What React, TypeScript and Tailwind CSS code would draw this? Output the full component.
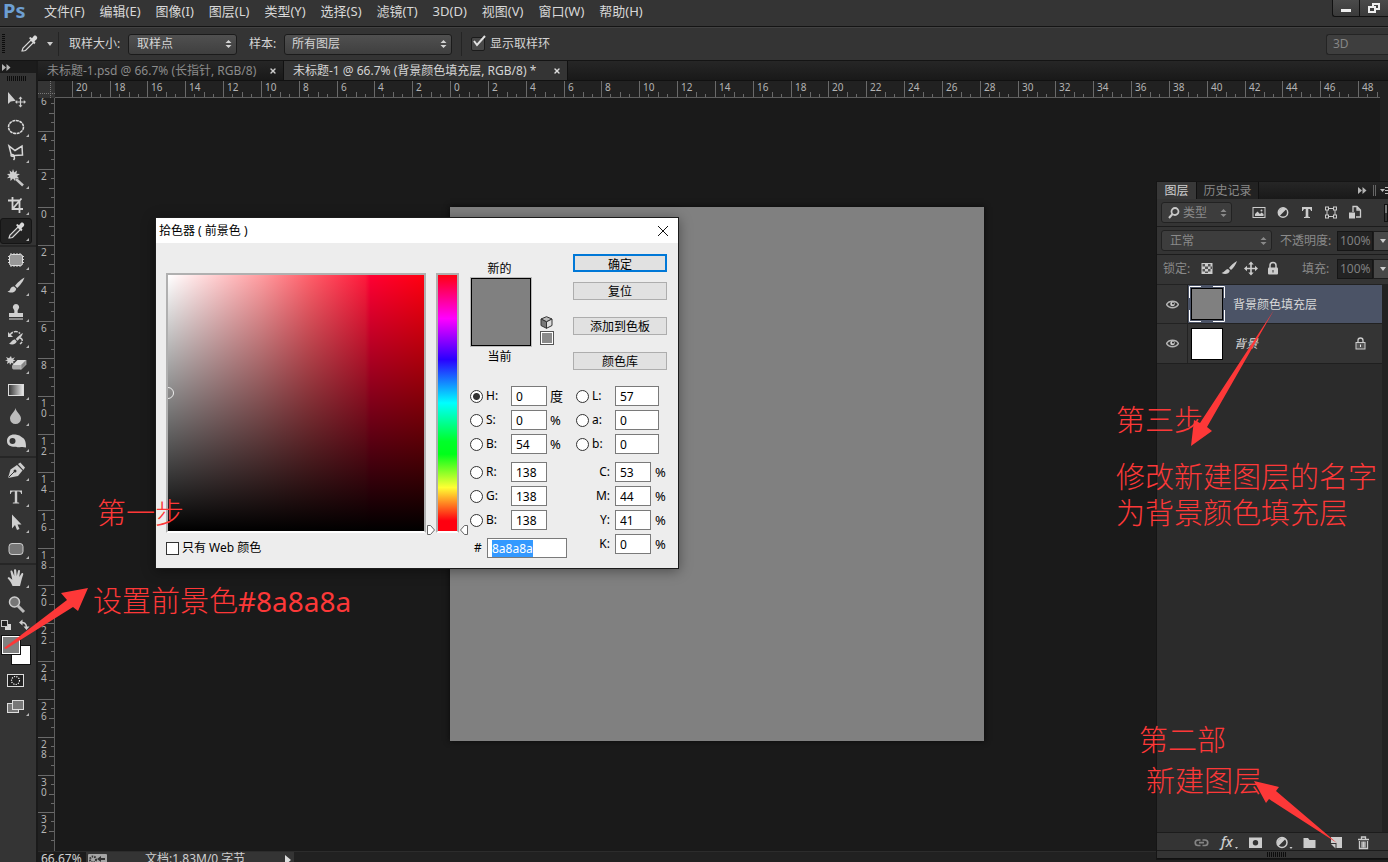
import React, { useEffect, useRef } from 'react';
import { X } from 'lucide-react';

const menus = [
  '文件(F)', '编辑(E)', '图像(I)', '图层(L)', '类型(Y)', '选择(S)',
  '滤镜(T)', '3D(D)', '视图(V)', '窗口(W)', '帮助(H)',
];

const Grip = () => (
  <svg width="20" height="5" className="shrink-0" aria-hidden="true">
    {Array.from({ length: 10 }, (_, i) => (
      <rect key={i} x={i * 2} width="1" height="5" fill="#0c0c0c" />
    ))}
  </svg>
);

const Collapse = () => (
  <svg width="9" height="7" viewBox="0 0 9 7" fill="#b4b4b4" className="shrink-0" aria-hidden="true">
    <path d="M0 0l4 3.5L0 7zM4.5 0l4 3.5-4 3.5z" />
  </svg>
);

const UpDown = () => (
  <svg
    width="7"
    height="10"
    viewBox="0 0 7 10"
    fill="currentColor"
    className="pointer-events-none absolute right-1 top-1/2 -translate-y-1/2"
    aria-hidden="true"
  >
    <path d="M3.5 1L6.5 4h-6zM3.5 9L.5 6h6z" />
  </svg>
);

const dropperPath = (
  <>
    <path d="M9 20l1-3 8-8 2.500 2.500-8 8-2.500 .5z" fill="#333" stroke="#dadada" strokeWidth="1.200" />
    <path d="M16 7l1.500-1 1.500 1.300 1.800-2.300c1.500-1.500 4.700 1 2.900 3.200l-2.200 2 1 1.500-1.300 1.500z" fill="#dadada" />
  </>
);

const brushPath = (
  <>
    <path d="M24.500 4.500c-3 1.500-7.500 5.500-9.500 8.200l2.200 2.200c2.800-2.400 6.300-7 7.300-10.400z" />
    <path d="M14 13.500c-2.500 0-3.500 1.500-4 3.300-.3 1-1.500 1.700-2.500 1.700 2.500 1.900 8 1.500 8.800-2.800z" />
  </>
);

type Tool = { name: string; icon: React.ReactNode; plain?: boolean; active?: boolean };

const toolGroups: Tool[][] = [
  [
    {
      name: '移动工具',
      plain: true,
      icon: (
        <>
          <path d="M8 4v12l2.700-2.500 5-.8z" />
          <path d="M20.500 9.500v9M16 14h9" stroke="#d0d0d0" strokeWidth="1.200" />
          <path d="M20.500 8.500l2 2.200h-4zM20.500 19.500l2-2.200h-4zM15 14l2.200-2v4zM26 14l-2.200-2v4z" />
        </>
      ),
    },
    {
      name: '椭圆选框工具',
      icon: <ellipse cx="16" cy="13" rx="7.500" ry="6.500" fill="none" stroke="#dcdcdc" strokeWidth="1.500" strokeDasharray="3 .6" />,
    },
    {
      name: '套索工具',
      icon: (
        <path
          d="M13.500 20c1-1 1.300-2 .8-3.500l-3-.5c-1-1.500 1-2 3-.5L22.500 15 22 6l-7 4.500L9 6l2.300 9"
          fill="none"
          stroke="#d8d8d8"
          strokeWidth="1.500"
        />
      ),
    },
    {
      name: '魔棒工具',
      icon: (
        <>
          <path d="M13 3l1.200 3.500L17 4.500l-.6 3.200 3.600.3-3 2 2.200 2.500-3.500-.6L15 15l-2-2.600L10.500 15l-.2-3.200-3.300.5L9.200 10 7 8l3.200-.2L9.500 4.500 12 6.300z" />
          <path d="M16 13l7 6.500" stroke="#c8c8c8" strokeWidth="2.500" />
        </>
      ),
    },
    {
      name: '裁剪工具',
      icon: <path d="M12.500 5v12H23M8 8.500h11.500V21M12.500 17l9-10.500" fill="none" stroke="#d4d4d4" strokeWidth="1.800" />,
    },
    { name: '吸管工具', active: true, icon: dropperPath },
  ],
  [
    {
      name: '修复工具',
      icon: (
        <>
          <path d="M11 6v14M14 6v14M17 6v14M20 6v14M8 9.500h16M8 12.500h16M8 15.500h16" stroke="#d8d8d8" strokeWidth="1" />
          <rect x="9.500" y="7.500" width="13" height="11" rx="2" fill="#999" stroke="#ddd" />
        </>
      ),
    },
    { name: '画笔工具', icon: brushPath },
    {
      name: '图章工具',
      icon: (
        <>
          <path d="M16 5a3.200 3.200 0 0 1 2.200 5.500c-.7 1-.7 2-.4 3.500H23v4H9v-4h5.200c.3-1.500.3-2.500-.4-3.500A3.200 3.200 0 0 1 16 5z" />
          <path d="M9 20h14" stroke="#ddd" />
        </>
      ),
    },
    {
      name: '历史记录画笔工具',
      icon: (
        <>
          <path d="M23 8c-2.500 1-5.500 4-7.200 6l1.700 1.700C20 13.700 22 11 23 8z" />
          <path d="M15 14.500c-2.800 0-3 2.500-6 4 2.500 1.800 7.500.8 7.700-2.200z" />
          <path d="M10 10c2-4 8-4.500 10-1.500M20 13c3 1 3 4 0 6" fill="none" stroke="#d0d0d0" strokeWidth="1.500" strokeDasharray="4 1" />
          <path d="M8 7v5h5z" />
        </>
      ),
    },
    {
      name: '橡皮擦工具',
      icon: (
        <>
          <path d="M11 5l.8 2.600L15 6.200l-1.800 2.400 2.300 1.200-2.600.6 1 2.600-2.300-1.300L10 14l-.6-2.500L7 13l.6-3L5 9.500l2.500-1L6 6l3 1.300z" />
          <path d="M17.500 9H26l-5 5h-8.500z" fill="#ddd" />
          <path d="M12.500 14H21v4.500h-7.500c-1.500 0-2-3-1-4.500z" fill="#aaa" />
          <path d="M21 14l5-5v4.500l-5 5z" fill="#888" stroke="#ccc" strokeWidth=".6" />
        </>
      ),
    },
    {
      name: '渐变工具',
      icon: (
        <>
          <defs>
            <linearGradient id="toolFade">
              <stop offset="0" stopColor="#333" />
              <stop offset="1" stopColor="#eee" />
            </linearGradient>
          </defs>
          <rect x="8.500" y="7.500" width="15" height="11" fill="url(#toolFade)" stroke="#ddd" />
        </>
      ),
    },
    { name: '模糊工具', icon: <path d="M15.500 5c.5 4 5.500 6.500 5.500 10.500a5.500 5.500 0 0 1-11 0C10 11.500 14.800 9 15.500 5z" fill="#bcbcbc" /> },
    {
      name: '减淡工具',
      icon: (
        <>
          <path d="M7 12c0-4.500 3.500-7 8.500-6.500 3 .3 5 1.500 7.500 3.500 2 1.500 3 4 3 9.500-2-.5-3-.7-5-.5-2 .5-3 .5-5-.3-5 .3-9-1.200-9-5.700z" />
          <circle cx="12.500" cy="12" r="3" fill="#333" />
        </>
      ),
    },
  ],
  [
    {
      name: '钢笔工具',
      icon: (
        <>
          <path d="M8 20l2.500-8.500L17 7l5.500 5.500L18 18z" />
          <path d="M18 6l2.300-1.500L25 9.500 23.300 12z" />
          <path d="M8.500 19.500l6-6" stroke="#333" />
          <circle cx="15" cy="13" r="1.500" fill="#333" />
        </>
      ),
    },
    {
      name: '文字工具',
      icon: <path d="M10 6.500h12v3.500h-.8c-.4-2-1-2.500-4-2.500v10c0 .8.500 1.200 2 1.200v.8h-6.400v-.8c1.500 0 2-.4 2-1.200v-10c-3 0-3.600.5-4 2.500H10z" />,
    },
    { name: '路径选择工具', icon: <path d="M12 4.500v14l3-3.500 2 5 2.500-1-2-4.500h4z" /> },
    {
      name: '圆角矩形工具',
      icon: <rect x="9" y="7.500" width="14" height="11" rx="3" fill="#777" stroke="#ccc" />,
    },
  ],
  [
    {
      name: '抓手工具',
      icon: (
        <path d="M12.500 21c-1-3-2.500-5-4.700-7.500-.6-1 1-1.800 2-.8l2.500 2-1.800-8c-.2-1.300 1.600-1.500 2-.3L14.300 11 14 5.200c0-1.300 2-1.400 2.200 0l.6 5.800 1.200-5.300c.3-1.200 2.100-.9 2 .4l-.7 5.900 2.200-3.500c.7-1 2.200-.2 1.700 1-1 2.600-1.500 5-2.200 7.500L20 21z" />
      ),
    },
    {
      name: '缩放工具',
      plain: true,
      icon: (
        <>
          <path d="M18 15l6 6" stroke="#bbb" strokeWidth="3" />
          <circle cx="14.500" cy="11" r="5" fill="#777" stroke="#cfcfcf" strokeWidth="1.500" />
        </>
      ),
    },
  ],
];

const Toolbar = () => (
  <aside className="flex w-[38px] shrink-0 flex-col border-r-2 border-[#1a1a1a] bg-[#343434]">
    <div className="flex h-[12px] items-center bg-[#1c1c1c] pl-[2px]">
      <Collapse />
    </div>
    <div className="flex h-[15px] items-start pl-[7px] pt-[3px]">
      <Grip />
    </div>
    {toolGroups.map((group, g) => (
      <div key={g} className={g ? 'mt-[1px] border-t-2 border-[#262626]' : ''}>
        {group.map((tool) => (
          <button
            key={tool.name}
            aria-label={tool.name}
            className={
              tool.active
                ? 'flex h-[26px] w-[32px] rounded-[3px] border border-[#151515] bg-[#222]'
                : 'flex h-[26px] w-[32px] border border-transparent'
            }
          >
            <svg width="30" height="24" viewBox="1 1 30 24" fill="#cfcfcf" className="shrink-0">
              {tool.icon}
              {!tool.plain && <path d="M29 20v3h-3z" fill="#b8b8b8" />}
            </svg>
          </button>
        ))}
      </div>
    ))}
    <svg width="36" height="104" viewBox="0 617 36 104" className="shrink-0" aria-label="前景色和背景色">
      <rect x="5" y="624" width="6" height="6" fill="#d8d8d8" />
      <rect x="1.500" y="620.500" width="6" height="6" fill="#222" stroke="#c8c8c8" />
      <path d="M21 622.500c3-.5 5.500 1 5.500 5" fill="none" stroke="#d0d0d0" strokeWidth="1.500" />
      <path d="M19 622.500l3.500-3v6zM26.500 630l-3-3.500h6z" fill="#d0d0d0" />
      <rect x="11.500" y="645.500" width="19" height="19" fill="#fff" stroke="#111" />
      <rect x="1.500" y="635.500" width="19" height="19" fill="#808080" stroke="#111" />
      <rect x="2.500" y="636.500" width="17" height="17" fill="none" stroke="#fff" />
      <rect x="7.500" y="674.500" width="16" height="12" fill="#222" stroke="#ddd" />
      <circle cx="15.500" cy="680.500" r="4" fill="none" stroke="#fff" strokeWidth="1.200" strokeDasharray="1.200 1.200" />
      <rect x="7.500" y="703.500" width="11" height="9" fill="#777" stroke="#ddd" />
      <rect x="12.500" y="700.500" width="11" height="9" fill="#777" stroke="#ddd" />
      <path d="M29 713v3h-3z" fill="#b8b8b8" />
    </svg>
  </aside>
);

// one major division of the ruler is two centimetres at 66.7%
const STEP = 454 / 12;

const RulerTop = () => {
  const marks = Array.from({ length: 35 }, (_, i) => i - 10);
  return (
    <svg className="h-[17px] w-full min-w-0 bg-[#212121]" fontSize="10" fill="#b4b4b4">
      {marks.map((m) => {
        const x = Math.round(395 + m * STEP);
        return (
          <g key={m}>
            <rect x={x} width="1" height="16" fill="#6a6a6a" />
            <rect x={x + 9} y="13" width="1" height="3" fill="#6a6a6a" />
            <rect x={x + 19} y="11" width="1" height="5" fill="#6a6a6a" />
            <rect x={x + 28} y="13" width="1" height="3" fill="#6a6a6a" />
            <text x={x + 4} y="10">{Math.abs(m * 2)}</text>
          </g>
        );
      })}
      <rect y="16" width="100%" height="1" fill="#5e5e5e" />
    </svg>
  );
};

const RulerLeft = () => {
  const marks = Array.from({ length: 20 }, (_, i) => i - 3);
  return (
    <svg className="h-full w-[17px] shrink-0 bg-[#212121]" fontSize="10" fill="#b4b4b4">
      {marks.map((m) => {
        const y = Math.round(109 + m * STEP);
        return (
          <g key={m}>
            <rect y={y} width="16" height="1" fill="#6a6a6a" />
            <rect x="13" y={y + 9} width="3" height="1" fill="#6a6a6a" />
            <rect x="11" y={y + 19} width="5" height="1" fill="#6a6a6a" />
            <rect x="13" y={y + 28} width="3" height="1" fill="#6a6a6a" />
            {String(Math.abs(m * 2)).split('').map((d, i) => (
              <text key={i} x="3" y={y + 11 + i * 10}>{d}</text>
            ))}
          </g>
        );
      })}
      <rect x="16" width="1" height="100%" fill="#5e5e5e" />
    </svg>
  );
};

const Document = () => (
  <main className="flex min-w-0 flex-1 flex-col">
    <div className="flex h-[20px] shrink-0 border-b border-[#111] bg-linear-to-b from-[#262626] to-[#191919] text-[12px] leading-[19px]">
      <div className="flex w-[246px] items-center justify-between border-r border-[#111] pl-[9px] pr-[6px] text-[#8b8b8b]">
        <span className="whitespace-pre">未标题-1.psd @ 66.7% (长指针, RGB/8)</span>
        <button aria-label="关闭" className="text-[#ccc]"><X size={8} strokeWidth={4} /></button>
      </div>
      <div className="flex w-[284px] items-center justify-between border-r border-[#111] bg-[#343434] pl-[9px] pr-[6px] text-[#d4d4d4]">
        <span className="whitespace-pre">未标题-1 @ 66.7% (背景颜色填充层, RGB/8) *</span>
        <button aria-label="关闭" className="text-[#ddd]"><X size={8} strokeWidth={4} /></button>
      </div>
    </div>
    <div className="flex min-h-0 flex-1">
      <div className="flex min-w-0 flex-1 flex-col">
        <div className="flex shrink-0">
          <svg width="17" height="17" className="shrink-0 bg-[#343434]" aria-hidden="true">
            <path d="M12.500 0v17M0 12.500h17" stroke="#777" strokeDasharray="1 1" />
          </svg>
          <RulerTop />
        </div>
        <div className="flex min-h-0 flex-1">
          <RulerLeft />
          <div className="flex min-w-0 flex-1 items-center justify-center bg-[#1a1a1a] pb-px pr-px">
            <div className="size-[534px] shrink-0 bg-[#808080] shadow-[0_0_6px_#0a0a0a]" />
          </div>
        </div>
      </div>
      <div className="w-2 shrink-0 bg-[#222]" />
    </div>
    <footer className="flex h-[11px] shrink-0 overflow-hidden border-t border-[#2c2c2c] bg-[#212121] text-[12px] leading-[14px] text-[#d0d0d0]">
      <span className="w-[48px] bg-[#1c1c1c] pl-[3px]">66.67%</span>
      <div className="flex w-[208px] bg-[#343434] pl-[2px]">
        <svg width="19" height="14" viewBox="0 0 19 14" className="mt-[2px] shrink-0" aria-hidden="true">
          <rect width="19" height="14" rx="1" fill="#a5a5a5" />
          <circle cx="5" cy="5.500" r="3" fill="none" stroke="#333" strokeWidth="2" strokeDasharray="1.500 1" />
          <path d="M9 5l4-3v2h4v2h-4v2z" fill="#333" />
        </svg>
        <span className="ml-[38px] whitespace-nowrap">文档:1.83M/0 字节</span>
        <svg width="6" height="10" viewBox="0 0 6 10" className="ml-auto mr-[3px] mt-[3px] shrink-0" fill="#ddd" aria-hidden="true">
          <path d="M0 0l6 5-6 5z" />
        </svg>
      </div>
    </footer>
  </main>
);

const layerFilters = [
  {
    name: '像素图层',
    icon: (
      <>
        <rect x="1" y="2.500" width="12" height="10" fill="none" stroke="#ccc" />
        <path d="M3 11V9l2.500-2.500L8 9l1.500-1.500L11.500 9v2z" />
        <circle cx="9.500" cy="5.500" r="1" />
      </>
    ),
  },
  {
    name: '调整图层',
    icon: (
      <>
        <circle cx="7" cy="7.500" r="4.700" fill="none" stroke="#ccc" strokeWidth="1.500" />
        <path d="M3.500 11L10.500 4A5 5 0 0 0 3.500 11z" />
      </>
    ),
  },
  {
    name: '文字图层',
    icon: <path d="M2 2h10v4h-1c-.2-1.500-.7-2-2.700-2v7c0 .8.400 1 1.700 1v1H4v-1c1.300 0 1.700-.2 1.700-1V4C3.700 4 3.200 4.500 3 6H2z" />,
  },
  {
    name: '形状图层',
    icon: (
      <>
        <rect x="3" y="3.500" width="8" height="8" fill="none" stroke="#ccc" />
        <path d="M1 1.500h4v4H1zM9 1.500h4v4H9zM1 9.500h4v4H1zM9 9.500h4v4H9z" />
        <path d="M2 2.500h2v2H2zM10 2.500h2v2h-2zM2 10.500h2v2H2zM10 10.500h2v2h-2z" fill="#333" />
      </>
    ),
  },
  {
    name: '智能对象',
    icon: (
      <>
        <path d="M5 7V1.500h4L12.500 5v7H8M9 1.500V5h3.500" fill="none" stroke="#ccc" strokeWidth="1.300" />
        <rect x="1" y="7.500" width="6" height="6" />
      </>
    ),
  },
];

const lockIcons = [
  {
    name: '锁定透明像素',
    icon: (
      <>
        <rect x="1.500" y="2" width="11" height="11" fill="#ccc" />
        <path d="M2.500 3h2.500v2.500H2.500zM8 3h2.500v2.500H8zM5 5.500h3v2.500H5zM10.500 5.500h1.500v2.500h-1.500zM2.500 8H5v2.500H2.500zM8 8h2.500v2.500H8zM5 10.500h3V12H5z" fill="#555" />
      </>
    ),
  },
  {
    name: '锁定图像像素',
    icon: <path d="M15 0c-3 1.500-6.500 5-8 7l2 2c2.500-2 5-5.500 6-9zM6 8c-2.500 0-3 3-6.500 4 3 2 7.500 1.200 8.300-2.200z" />,
  },
  {
    name: '锁定位置',
    icon: (
      <path d="M7 .5l2.700 3H7.800v3.200H11V4.800l3 2.700-3 2.700V8.300H7.800v3.200h1.900l-2.700 3-2.700-3h1.900V8.300H3v1.900L0 7.500l3-2.700v1.900h3.200V3.500H4.300z" />
    ),
  },
  {
    name: '锁定全部',
    icon: (
      <>
        <path d="M4 7V4.500a3 3 0 0 1 6 0V7" fill="none" stroke="#ccc" strokeWidth="1.500" />
        <rect x="2" y="6.500" width="10" height="7" rx="1" />
        <rect x="6.500" y="9" width="1" height="2.500" fill="#333" />
      </>
    ),
  },
];

const layerActions = [
  {
    name: '链接图层',
    icon: (
      <path d="M6.500 5H4a2.700 2.700 0 0 0 0 5.500h2.500M8.500 5H11a2.700 2.700 0 0 1 0 5.500H8.500M5 7.700h5" fill="none" stroke="#858585" strokeWidth="1.700" />
    ),
  },
  {
    name: '图层样式',
    icon: (
      <>
        <text x="0" y="12" fontSize="14" fontStyle="italic" fontWeight="500" className="font-['Noto_Sans']">fx</text>
        <path d="M14 12h3l-1.500 2z" />
      </>
    ),
  },
  {
    name: '图层蒙版',
    icon: (
      <>
        <rect x="1" y="2.500" width="13" height="10.500" />
        <circle cx="7.500" cy="7.700" r="2.700" fill="#333" />
      </>
    ),
  },
  {
    name: '调整图层',
    icon: (
      <>
        <circle cx="7" cy="7.500" r="5" fill="none" stroke="#ccc" strokeWidth="1.500" />
        <path d="M3.500 11l7-7A5 5 0 0 0 3.500 11z" />
        <path d="M14.500 12h3L16 14z" />
      </>
    ),
  },
  { name: '新建组', icon: <path d="M1.500 3h4.500l1.500 2h6v8h-12z" /> },
  {
    name: '新建图层',
    icon: (
      <>
        <path d="M2 2h11v11H7.500V8H2z" />
        <path d="M2 9h4.500v4.500z" />
      </>
    ),
  },
  {
    name: '删除图层',
    icon: (
      <path d="M2 4.500h11M5.500 4V2h4v2M3.500 6v7.500h8V6M6 6.500v6M9 6.500v6M7.500 6.500v6" fill="none" stroke="#ccc" strokeWidth="1.300" />
    ),
  },
];

const Eye = () => (
  <svg width="13" height="9" viewBox="0 0 13 9" aria-hidden="true">
    <path d="M.5 4.500C3 .2 10 .2 12.500 4.500 10 8.800 3 8.800.5 4.500z" fill="#333" stroke="#b5b5b5" strokeWidth="1.500" />
    <circle cx="6.500" cy="4" r="2.300" fill="#ccc" />
    <circle cx="7" cy="3.500" r="1" fill="#222" />
  </svg>
);

const Percent = ({ id }: { id: string }) => (
  <div className="flex h-[20px] shrink-0">
    <input
      id={id}
      defaultValue="100%"
      className="w-[36px] border border-[#161616] bg-[#232323] pl-[2px] text-[12px] text-[#808080] outline-none"
    />
    <button aria-label="展开" className="flex w-[20px] items-center border border-[#1c1c1c] bg-[#484848] pl-[6px]">
      <svg width="6" height="4" fill="#ccc"><path d="M0 0h6L3 4z" /></svg>
    </button>
  </div>
);

const LayersPanel = () => (
  <section className="absolute bottom-[3px] right-0 top-[182px] flex w-[231px] flex-col overflow-hidden border-b border-[#111] bg-[#343434] text-[12px] text-[#8a8a8a] shadow-[0_0_0_1px_#151515]">
    <div className="flex h-[17px] shrink-0 bg-linear-to-b from-[#262626] to-[#191919] leading-[17px]">
      <button className="w-[39px] bg-[#383838] text-[#d0d0d0]">图层</button>
      <button className="w-[63px] border-x border-[#111] bg-[#222] text-[#8a8a8a]">历史记录</button>
      <div className="ml-auto flex items-center gap-[6px]">
        <Collapse />
        <svg width="15" height="11" className="shrink-0" aria-hidden="true">
          <path d="M.5 0v11M2.500 0v11" stroke="#666" />
          <path d="M7 4h5l-2.500 3z" fill="#bbb" />
          <path d="M12 2.500h5M12 5.500h5M12 8.500h5" stroke="#bbb" />
        </svg>
      </div>
    </div>
    <div className="flex h-[28px] shrink-0 items-center border-b border-[#1c1c1c] pl-1">
      <div className="relative flex h-[21px] w-[71px] items-center rounded-[3px] border border-[#222] bg-[#3d3d3d]">
        <svg width="12" height="12" viewBox="0 0 12 12" className="pointer-events-none absolute left-[6px]" fill="none" stroke="#c8c8c8" aria-hidden="true">
          <circle cx="7" cy="4.500" r="3.500" strokeWidth="1.800" />
          <path d="M4.500 7L1 11" strokeWidth="2" />
        </svg>
        <select aria-label="图层过滤" className="w-full appearance-none bg-transparent pl-[21px] outline-none">
          <option>类型</option>
        </select>
        <UpDown />
      </div>
      <div className="ml-[20px] flex gap-[10px]">
        {layerFilters.map((f) => (
          <button key={f.name} aria-label={f.name}>
            <svg width="14" height="15" viewBox="0 0 14 15" fill="#ccc">{f.icon}</svg>
          </button>
        ))}
      </div>
      <div className="ml-auto h-[18px] w-[4px] border border-[#111] bg-linear-to-b from-[#777] from-50% to-[#333] to-50%" />
    </div>
    <div className="flex h-[28px] shrink-0 items-center border-b border-[#1c1c1c] pl-1">
      <div className="relative flex h-[21px] w-[111px] shrink-0 items-center rounded-[3px] border border-[#222] bg-[#3d3d3d]">
        <select aria-label="混合模式" className="w-full appearance-none bg-transparent pl-[8px] outline-none">
          <option>正常</option>
        </select>
        <UpDown />
      </div>
      <label htmlFor="opacity" className="ml-2 w-[57px] shrink-0 whitespace-nowrap">不透明度:</label>
      <Percent id="opacity" />
    </div>
    <div className="flex h-[30px] shrink-0 items-center border-b border-[#222] pb-[2px] pl-[6px]">
      <span className="w-[37px] shrink-0">锁定:</span>
      <div className="flex gap-2">
        {lockIcons.map((l) => (
          <button key={l.name} aria-label={l.name}>
            <svg width="14" height="15" viewBox="0 0 14 15" fill="#ccc" className="overflow-visible">{l.icon}</svg>
          </button>
        ))}
      </div>
      <label htmlFor="fill" className="ml-[22px] w-[35px] shrink-0 whitespace-nowrap">填充:</label>
      <Percent id="fill" />
    </div>
    <div className="flex min-h-0 flex-1">
      <div className="min-w-0 flex-1 bg-[#2b2b2b] text-[#d8d8d8]">
        <div className="flex h-[39px] items-center border-b border-[#222] bg-[#4b5366]">
          <div className="flex h-full w-[31px] items-center justify-center border-r border-[#222] bg-[#343434]"><Eye /></div>
          <svg width="36" height="36" className="ml-[1px]" aria-label="图层缩览图">
            <rect x="2.500" y="2.500" width="31" height="31" fill="#808080" stroke="#000" />
            <path d="M.5 12V.5H12M24 .5h11.500V12M35.500 24v11.500H24M12 35.500H.5V24" fill="none" stroke="#fff" />
          </svg>
          <span className="ml-[8px] pt-[2px]">背景颜色填充层</span>
        </div>
        <div className="flex h-[40px] items-center border-b border-[#1f1f1f] bg-[#343434]">
          <div className="flex h-full w-[31px] items-center justify-center border-r border-[#222]"><Eye /></div>
          <div className="ml-[3px] size-[32px] border border-black bg-white" />
          <span className="ml-[11px] italic">背景</span>
          <svg width="11" height="13" viewBox="0 0 11 13" className="ml-auto mr-[16px]" aria-label="已锁定">
            <path d="M3 6V3.500a2.500 2.500 0 0 1 5 0V6" fill="none" stroke="#ccc" strokeWidth="1.300" />
            <rect x="1" y="5.500" width="9" height="6.500" fill="#555" stroke="#ccc" />
            <path d="M5.500 7.500V10" stroke="#eee" />
          </svg>
        </div>
      </div>
      <div className="w-[6px] shrink-0 bg-[#222]" />
    </div>
    <div className="flex h-[19px] shrink-0 items-end gap-[12px] border-b border-t border-[#1c1c1c] pl-[37px]">
      {layerActions.map((a) => (
        <button key={a.name} aria-label={a.name}>
          <svg width="15" height="15" viewBox="0 0 15 15" fill="#ccc" className="overflow-visible">{a.icon}</svg>
        </button>
      ))}
    </div>
    <div className="flex h-[7px] shrink-0 items-center justify-center pl-[8px]">
      <Grip />
    </div>
  </section>
);

type Field = { id: string; label: string; value: string; unit?: string; checked?: boolean };

const hsb: Field[] = [
  { id: 'h', label: 'H:', value: '0', unit: '度', checked: true },
  { id: 's', label: 'S:', value: '0', unit: '%' },
  { id: 'v', label: 'B:', value: '54', unit: '%' },
];
const rgb: Field[] = [
  { id: 'r', label: 'R:', value: '138' },
  { id: 'g', label: 'G:', value: '138' },
  { id: 'bl', label: 'B:', value: '138' },
];
const lab: Field[] = [
  { id: 'lab-l', label: 'L:', value: '57' },
  { id: 'lab-a', label: 'a:', value: '0' },
  { id: 'lab-b', label: 'b:', value: '0' },
];
const cmyk: Field[] = [
  { id: 'c', label: 'C:', value: '53', unit: '%' },
  { id: 'm', label: 'M:', value: '44', unit: '%' },
  { id: 'y', label: 'Y:', value: '41', unit: '%' },
  { id: 'k', label: 'K:', value: '0', unit: '%' },
];

const RadioRow = ({ f, wide }: { f: Field; wide?: boolean }) => (
  <div className="flex h-[20px] items-center">
    <input
      type="radio"
      name="channel"
      id={f.id}
      defaultChecked={f.checked}
      className="size-[13px] shrink-0 appearance-none rounded-full border border-[#333] bg-white checked:bg-[radial-gradient(circle,#333_0_3px,#fff_4px)]"
    />
    <label htmlFor={f.id} className={wide ? 'w-[26px] pl-[3px]' : 'w-[28px] pl-[3px]'}>{f.label}</label>
    <input
      aria-label={f.label}
      defaultValue={f.value}
      className={
        wide
          ? 'h-[20px] w-[44px] border border-[#7a7a7a] bg-white pl-[4px] outline-none'
          : 'h-[20px] w-[36px] border border-[#7a7a7a] bg-white pl-[4px] outline-none'
      }
    />
    {f.unit && <span className="ml-[3px] text-[13px]">{f.unit}</span>}
  </div>
);

const PickerButton = ({ children, className }: { children: React.ReactNode; className: string }) => (
  <button className={className}>
    <span className="block pt-px leading-[16px]">{children}</span>
  </button>
);

const ColorPicker = () => {
  const hex = useRef<HTMLInputElement>(null);

  useEffect(() => {
    hex.current?.focus({ preventScroll: true });
    hex.current?.select();
  }, []);

  return (
    <div role="dialog" aria-label="拾色器" className="absolute left-[155px] top-[217px] w-[524px] border border-[#1c1c1c] bg-[#ededed] text-[12px] leading-[16px] text-black shadow-[0_2px_12px_#0006]">
      <header className="flex h-[25px] items-center justify-between bg-white pl-[3px] pr-[9px]">
        <h1>拾色器 ( 前景色 )</h1>
        <button aria-label="关闭">
          <svg width="12" height="12" viewBox="0 0 12 12" stroke="#111"><path d="M1 1l10 10M11 1L1 11" /></svg>
        </button>
      </header>
      <div className="flex h-[325px] pl-[10px] pt-[11px]">
        <div className="mt-[19px]">
          <div className="relative overflow-hidden border-2 border-[#b0b0b0] border-b-white">
            <div className="size-[256px] bg-[linear-gradient(to_right,#fff,#ff9a9e_37%,#ff5c68_56%,#ff1a3c_77%,#ff0033_79%,#ff0010)]">
              <div className="size-full bg-linear-to-b from-transparent to-black" />
            </div>
            <div className="absolute -left-[6px] top-[112px] size-[12px] rounded-full border border-[#eee]" />
          </div>
          <label className="mt-[7px] flex items-center gap-[3px]">
            <input type="checkbox" className="size-[13px] appearance-none border border-[#333] bg-white" />
            只有 Web 颜色
          </label>
        </div>
        <div className="relative ml-[10px] mt-[19px] h-[260px] w-[23px] shrink-0 border-2 border-[#b0b0b0] border-b-white bg-[linear-gradient(#ff0010,#ff00ff_17%,#2a00ff_33%,#00ffff_50%,#00ff2a_65%,#00ff1a_70%,#ffff33_83%,#ff0010_96%)]">
          <svg width="41" height="10" viewBox="0 0 41 10" className="absolute -left-[11px] top-[250px]" fill="#fff" stroke="#666" aria-hidden="true">
            <path d="M.5 .5h3l4 4.500-4 4.500h-3zM40.500 .5h-3L33.500 5l4 4.500h3z" />
          </svg>
        </div>
        <div className="ml-[11px]">
          <div className="flex h-[132px]">
            <div className="w-[62px] pt-[7px] text-center leading-[16px]">
              <p className="h-[16px] pr-[3px]">新的</p>
              <div className="h-[70px] border border-[#bbb] bg-[#bbb]">
                <div className="size-full border border-black bg-[#808080]" />
              </div>
              <p className="pr-[3px] pt-[2px]">当前</p>
            </div>
            <div className="ml-[8px] flex w-[33px] flex-col gap-[2px] pt-[62px]">
              <svg width="13" height="13" viewBox="0 0 13 13" stroke="#333" aria-hidden="true">
                <path d="M6.500 .7L12 3 6.500 5.800 1 3z" fill="#bbb" />
                <path d="M1 3l5.500 2.800v6.500L1 9.500z" fill="#777" />
                <path d="M12 3L6.500 5.800v6.500L12 9.500z" fill="#ddd" />
              </svg>
              <div className="size-[14px] border border-[#555] bg-[#8a8a8a] ring-1 ring-inset ring-white" />
            </div>
            <div className="flex flex-col">
              <PickerButton className="h-[18px] w-[94px] border-2 border-[#0078d7] bg-[#e1e1e1]">确定</PickerButton>
              <PickerButton className="mt-[10px] h-[18px] w-[94px] border border-[#adadad] bg-[#e1e1e1]">复位</PickerButton>
              <PickerButton className="mt-[17px] h-[18px] w-[94px] border border-[#adadad] bg-[#e1e1e1]">添加到色板</PickerButton>
              <PickerButton className="mt-[17px] h-[18px] w-[94px] border border-[#adadad] bg-[#e1e1e1]">颜色库</PickerButton>
            </div>
          </div>
          <div className="flex">
            <div className="flex w-[106px] flex-col gap-2">
              <div className="flex flex-col gap-1">
                {hsb.map((f) => <RadioRow key={f.id} f={f} />)}
              </div>
              <div className="flex flex-col gap-1">
                {rgb.map((f) => <RadioRow key={f.id} f={f} />)}
              </div>
              <div className="flex h-[20px] items-center pl-[4px]">
                <label htmlFor="hex" className="w-[13px]">#</label>
                <input
                  id="hex"
                  ref={hex}
                  defaultValue="8a8a8a"
                  className="h-[20px] w-[80px] border border-[#7a7a7a] bg-white pl-[4px] outline-none selection:bg-[#3399ff] selection:text-white"
                />
              </div>
            </div>
            <div className="flex flex-col gap-2">
              <div className="flex flex-col gap-1">
                {lab.map((f) => <RadioRow key={f.id} f={f} wide />)}
              </div>
              <div className="flex flex-col gap-1">
                {cmyk.map((f) => (
                  <div key={f.id} className="flex h-[20px] items-center">
                    <label htmlFor={f.id} className="w-[39px] pr-[5px] text-right">{f.label}</label>
                    <input id={f.id} defaultValue={f.value} className="h-[20px] w-[36px] border border-[#7a7a7a] bg-white pl-[4px] outline-none" />
                    <span className="ml-[4px] text-[13px]">{f.unit}</span>
                  </div>
                ))}
              </div>
            </div>
          </div>
        </div>
      </div>
    </div>
  );
};

const Notes = () => (
  <div className="pointer-events-none absolute inset-0 text-[29px] font-light leading-[36px] text-[#fd3838]">
    <p className="absolute left-[97px] top-[495px] whitespace-nowrap">第一步</p>
    <p className="absolute left-[93px] top-[583px] whitespace-nowrap">设置前景色<span className="text-[28px] font-normal">#8a8a8a</span></p>
    <p className="absolute right-[185px] top-[402px] whitespace-nowrap">第三步</p>
    <p className="absolute right-[11px] top-[459px] whitespace-nowrap">修改新建图层的名字<br />为背景颜色填充层</p>
    <p className="absolute bottom-[104px] right-[162px] whitespace-nowrap">第二部</p>
    <p className="absolute bottom-[63px] right-[126px] whitespace-nowrap">新建图层</p>
    <svg width="90" height="66" viewBox="0 585 90 66" className="absolute left-0 top-[585px]" fill="#fd3838" aria-hidden="true">
      <path d="M4 648l2 1 67-42 5 4 10-23-27 5 6 7z" />
    </svg>
    <svg width="90" height="140" viewBox="1188 308 90 140" className="absolute right-[110px] top-[308px]" fill="#fd3838" aria-hidden="true">
      <path d="M1274 310l-74 113-6-3-3 26 21-15-5-4z" />
    </svg>
    <svg width="90" height="68" viewBox="1250 778 90 68" className="absolute bottom-[16px] right-[48px]" fill="#fd3838" aria-hidden="true">
      <path d="M1337 843l-61-52 3-4-25-6 12 22 3-4z" />
    </svg>
  </div>
);

export default function App() {
  return (
    <div className="relative flex h-screen flex-col overflow-hidden bg-[#1a1a1a] font-['Noto_Sans','Noto_Sans_CJK_SC',sans-serif]">
      <header className="flex h-[27px] shrink-0 border-b border-[#141414] bg-[#343434]">
        <span className="w-[44px] shrink-0 pl-[3px] text-[20px] font-bold leading-[22px] text-[#6d9fd2]">Ps</span>
        <nav className="flex gap-[15px] text-[13px] leading-[22px] text-[#d8d8d8]">
          {menus.map((m) => (
            <button key={m} className="h-[22px] whitespace-nowrap">{m}</button>
          ))}
        </nav>
        <div className="ml-auto flex h-[17px] rounded-bl-[3px] border-b border-l border-[#111] bg-linear-to-b from-[#4a4a4a] to-[#3a3a3a]">
          <button aria-label="最小化" className="flex w-[27px] items-center justify-center border-r border-[#111] pt-1">
            <svg width="10" height="3" fill="#eee"><rect width="10" height="3" /></svg>
          </button>
          <button aria-label="还原" className="flex w-[28px] items-center justify-center">
            <svg width="12" height="10" viewBox="0 0 12 10" fill="none" stroke="#eee" strokeWidth="2">
              <path d="M5 3V1h6v5H8M1 4h6v5H1z" />
            </svg>
          </button>
        </div>
      </header>
      <div className="flex h-[34px] shrink-0 items-center border-b border-t border-b-[#141414] border-t-[#424242] bg-[#343434] text-[12px] text-[#d4d4d4]">
        <svg width="58" height="26" className="shrink-0" aria-hidden="true">
          {Array.from({ length: 10 }, (_, i) => (
            <rect key={i} x="2" y={3 + i * 2} width="3" height="1" fill="#0c0c0c" />
          ))}
          <g transform="translate(13 0)">{dropperPath}</g>
          <path d="M47 11h6l-3 4z" fill="#ccc" />
        </svg>
        <div className="h-[24px] w-px shrink-0 bg-[#242424]" />
        <label htmlFor="sample" className="ml-[10px] w-[59px] shrink-0">取样大小:</label>
        <div className="relative h-[21px] w-[109px] shrink-0 rounded-[3px] border border-[#1b1b1b] bg-linear-to-b from-[#505050] to-[#3f3f3f]">
          <select id="sample" className="h-full w-full appearance-none bg-transparent pl-[8px] outline-none">
            <option>取样点</option>
          </select>
          <UpDown />
        </div>
        <label htmlFor="source" className="ml-[12px] w-[35px] shrink-0">样本:</label>
        <div className="relative h-[21px] w-[168px] shrink-0 rounded-[3px] border border-[#1b1b1b] bg-linear-to-b from-[#505050] to-[#3f3f3f]">
          <select id="source" className="h-full w-full appearance-none bg-transparent pl-[7px] outline-none">
            <option>所有图层</option>
          </select>
          <UpDown />
        </div>
        <div className="ml-[9px] h-[24px] w-px shrink-0 bg-[#242424]" />
        <label className="relative ml-[9px] flex items-center gap-[5px]">
          <input type="checkbox" defaultChecked className="size-[14px] appearance-none rounded-[2px] border border-[#1b1b1b] bg-[#484848]" />
          <svg width="14" height="12" className="absolute left-[1px] top-0" fill="none" stroke="#e0e0e0" strokeWidth="2" aria-hidden="true">
            <path d="M2 6l3 4 8-9" />
          </svg>
          显示取样环
        </label>
        <button className="ml-auto h-[21px] w-[62px] rounded-l-[3px] border border-r-0 border-[#242424] bg-[#3e3e3e] pl-[6px] text-left text-[#858585]">3D</button>
      </div>
      <div className="flex min-h-0 flex-1">
        <Toolbar />
        <Document />
      </div>
      <LayersPanel />
      <ColorPicker />
      <Notes />
    </div>
  );
}
